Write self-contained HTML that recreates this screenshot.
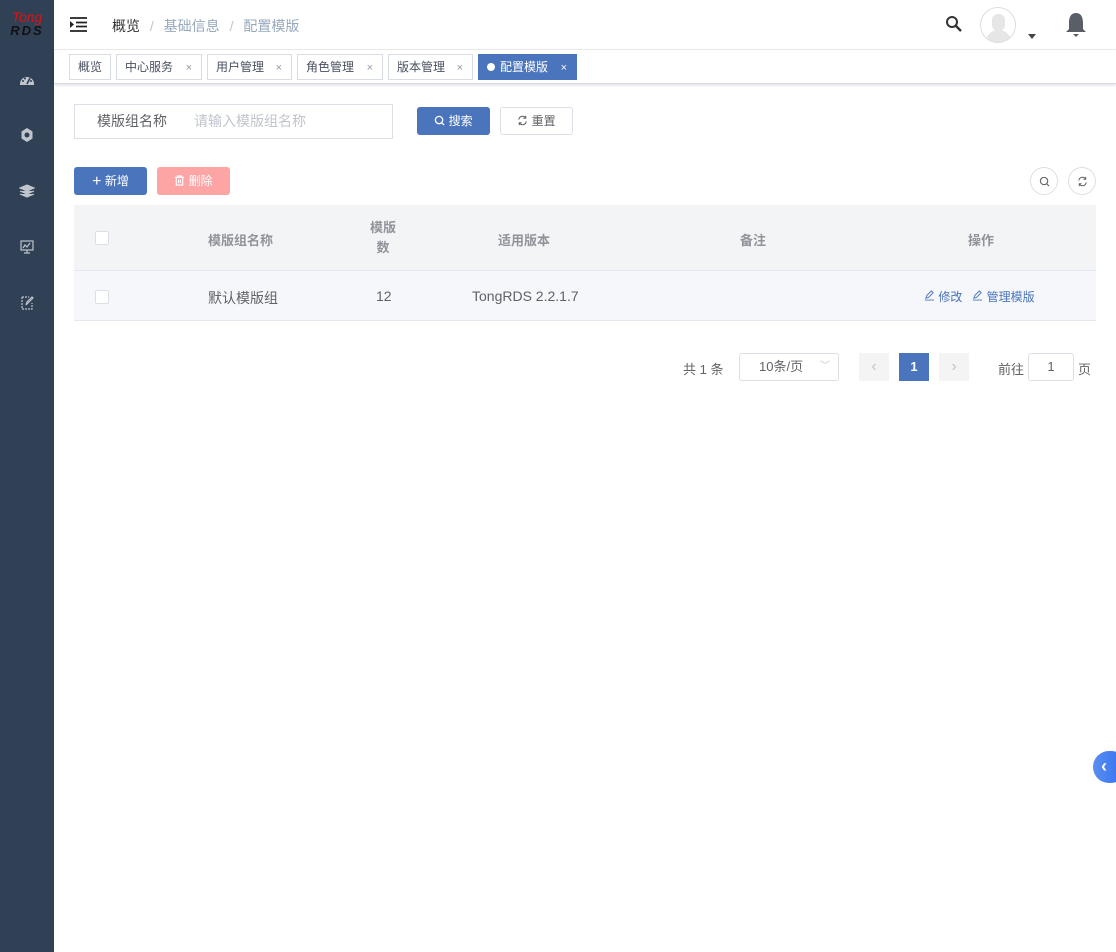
<!DOCTYPE html>
<html><head><meta charset="utf-8"><style>
*{box-sizing:border-box;margin:0;padding:0}
body{width:1116px;height:952px;overflow:hidden;background:#fff;font-family:"Liberation Sans","Noto Sans CJK SC",sans-serif;font-size:13px;color:#606266;position:relative}
.side{position:absolute;left:0;top:0;width:54px;height:952px;background:#304156}
.logo{position:absolute;left:0;top:10px;width:54px;text-align:center;font-style:italic;line-height:14px}
.logo .t{color:#e01010;font-size:14px;font-family:"Liberation Sans",sans-serif}
.logo .r{color:#111;font-size:13px;font-weight:bold;letter-spacing:2px}
.ic{position:absolute;left:19px;width:16px;height:16px}
.hdr{position:absolute;left:54px;top:0;right:0;height:50px;border-bottom:1px solid #eee}
.tabs{position:absolute;left:54px;top:50px;right:0;height:34px;box-shadow:0 1px 3px rgba(0,0,0,.15);border-bottom:1px solid #d8dce5}
.tab{position:absolute;top:4px;height:26px;border:1px solid #d8dce5;font-size:12px;color:#495060;line-height:24px;padding-left:8px}
.tab i{font-style:normal;font-size:11px;color:#999;position:absolute;right:9px;top:1px;line-height:24px}
.tab.act{background:#4a74bb;border-color:#4a74bb;color:#fff}
.tab.act i{color:#fff}
.abs{position:absolute}
.btn{position:absolute;border-radius:3px;font-size:12px;text-align:center;line-height:28px;height:28px}
</style></head><body>
<div class="side">
<div class="logo"><div class="t">Tong</div><div class="r">RDS</div></div>
<svg class="ic" style="top:72px" viewBox="0 0 16 16"><path d="M1 12 A7 7 0 0 1 15 12 L15 13 L1 13Z" fill="#c0c4cc"/><path d="M8 12 L11 6" stroke="#304156" stroke-width="1.6"/><circle cx="4" cy="9" r="1" fill="#304156"/><circle cx="6" cy="6.5" r="1" fill="#304156"/><circle cx="12" cy="9" r="1" fill="#304156"/></svg>
<svg class="ic" style="top:127px" viewBox="0 0 16 16"><path d="M8 1 L13.5 4.5 L13.5 11.5 L8 15 L2.5 11.5 L2.5 4.5Z" fill="#c0c4cc"/><circle cx="8" cy="8" r="2.5" fill="#304156"/></svg>
<svg class="ic" style="top:183px" viewBox="0 0 16 16"><path d="M8 2 L15 5 L8 8 L1 5Z M1 8 L8 11 L15 8 M1 11 L8 14 L15 11" fill="#c0c4cc" stroke="#c0c4cc" stroke-width="1.2"/></svg>
<svg class="ic" style="top:239px" viewBox="0 0 16 16" fill="none" stroke="#c0c4cc" stroke-width="1.2"><rect x="2" y="2" width="12" height="9"/><path d="M4 9 L6 6 L8 8 L11 4 M8 11 L8 14 M5 14 L11 14"/></svg>
<svg class="ic" style="top:295px" viewBox="0 0 16 16" fill="none" stroke="#c0c4cc" stroke-width="1.2"><path d="M3 2 L10 2 M3 2 L3 14 L13 14 L13 8" stroke-dasharray="2 1"/><path d="M7 10 L8 7 L13 2 L14 3 L9 8Z"/></svg>
</div>
<div class="hdr">
<svg class="abs" style="left:16px;top:17px" width="17" height="15" viewBox="0 0 17 15"><path d="M0 1H17M6 5.5H17M6 9.5H17M0 14H17" stroke="#222" stroke-width="1.8"/><path d="M0 4L4 7.5L0 11Z" fill="#222"/></svg>
<div class="abs" style="left:58px;top:16px;font-size:14px;color:#303133">概览 <span style="color:#c0c4cc;margin:0 6px">/</span> <span style="color:#97a8be">基础信息</span> <span style="color:#c0c4cc;margin:0 6px">/</span> <span style="color:#97a8be">配置模版</span></div>
<svg class="abs" style="left:891px;top:15px" width="18" height="18" viewBox="0 0 18 18"><circle cx="7" cy="7" r="5" fill="none" stroke="#333" stroke-width="2"/><path d="M11 11L16 16" stroke="#333" stroke-width="2.4"/></svg>
<div class="abs" style="left:926px;top:7px;width:36px;height:36px;border-radius:50%;border:1px solid #ddd;background:#fff;overflow:hidden"><div class="abs" style="left:11px;top:6px;width:13px;height:17px;border-radius:6px;background:#e6e6e6"></div><div class="abs" style="left:5px;top:22px;width:25px;height:18px;border-radius:12px 12px 0 0;background:#e6e6e6"></div></div>
<div class="abs" style="left:974px;top:34px;border:4px solid transparent;border-top:5px solid #444;border-bottom:0"></div>
<svg class="abs" style="left:1010px;top:12px" width="24" height="26" viewBox="0 0 24 26"><path d="M12 1 C6 1 5 7 5 11 L5 17 L2 20 L22 20 L19 17 L19 11 C19 7 18 1 12 1Z" fill="#5a5e66"/><path d="M9 22 L15 22 L12 25Z" fill="#5a5e66"/></svg>
</div>
<div class="tabs">
<div class="tab" style="left:15px;width:42px">概览</div>
<div class="tab" style="left:62px;width:86px">中心服务<i>×</i></div>
<div class="tab" style="left:153px;width:85px">用户管理<i>×</i></div>
<div class="tab" style="left:243px;width:86px">角色管理<i>×</i></div>
<div class="tab" style="left:334px;width:85px">版本管理<i>×</i></div>
<div class="tab act" style="left:424px;width:99px"><span style="display:inline-block;width:8px;height:8px;border-radius:50%;background:#fff;margin-right:5px;vertical-align:0"></span>配置模版<i>×</i></div>
</div>
<div class="abs" style="left:74px;top:104px;width:319px;height:35px;border:1px solid #dcdfe6;line-height:33px;font-size:14px"><span style="position:absolute;left:22px;color:#606266">模版组名称</span><span style="position:absolute;left:119px;color:#c0c4cc">请输入模版组名称</span></div>
<div class="btn" style="left:417px;top:107px;width:73px;background:#4a74bb;color:#fff">
<svg width="11" height="11" viewBox="0 0 12 12" style="vertical-align:-1px"><circle cx="5.5" cy="5.5" r="4" fill="none" stroke="#fff" stroke-width="1.4"/><path d="M8.5 8.5L11 11" stroke="#fff" stroke-width="1.4"/></svg> 搜索</div>
<div class="btn" style="left:500px;top:107px;width:73px;border:1px solid #dcdfe6;color:#606266;line-height:26px">
<svg width="11" height="11" viewBox="0 0 12 12" style="vertical-align:-1px" fill="none" stroke="#606266" stroke-width="1.2"><path d="M2 5A4 4 0 0 1 9.5 3.5M10 7A4 4 0 0 1 2.5 8.5"/><path d="M9.5 1V3.5H7M2.5 11V8.5H5"/></svg> 重置</div>
<div class="btn" style="left:74px;top:167px;width:73px;background:#4a74bb;color:#fff"><span style="font-size:16px;vertical-align:-1px">+</span> 新增</div>
<div class="btn" style="left:157px;top:167px;width:73px;background:#fda4a4;color:#fff">
<svg width="11" height="11" viewBox="0 0 12 12" style="vertical-align:-1px" fill="none" stroke="#fff" stroke-width="1.2"><path d="M1 2.5H11M4 2.5V1H8V2.5M2.5 2.5V11H9.5V2.5M5 5V9M7 5V9"/></svg> 删除</div>
<div class="abs" style="left:1030px;top:167px;width:28px;height:28px;border-radius:50%;border:1px solid #dcdfe6"><svg class="abs" style="left:8px;top:8px" width="11" height="11" viewBox="0 0 12 12"><circle cx="5.5" cy="5.5" r="4" fill="none" stroke="#606266" stroke-width="1.2"/><path d="M8.5 8.5L11 11" stroke="#606266" stroke-width="1.2"/></svg></div>
<div class="abs" style="left:1068px;top:167px;width:28px;height:28px;border-radius:50%;border:1px solid #dcdfe6"><svg class="abs" style="left:8px;top:8px" width="11" height="11" viewBox="0 0 12 12" fill="none" stroke="#606266" stroke-width="1.1"><path d="M2 5A4 4 0 0 1 9.5 3.5M10 7A4 4 0 0 1 2.5 8.5"/><path d="M9.5 1V3.5H7M2.5 11V8.5H5"/></svg></div>
<div class="abs" style="left:74px;top:205px;width:1022px;height:66px;background:#f3f4f6;border-bottom:1px solid #e4e7ed;font-weight:bold;color:#909399;font-size:13px">
<div class="abs" style="left:21px;top:26px;width:14px;height:14px;border:1px solid #dcdfe6;background:#fff;border-radius:2px"></div>
<div class="abs" style="left:134px;top:25px">模版组名称</div>
<div class="abs" style="left:296px;top:13px;line-height:20px;text-align:center">模版<br>数</div>
<div class="abs" style="left:424px;top:25px">适用版本</div>
<div class="abs" style="left:666px;top:25px">备注</div>
<div class="abs" style="left:894px;top:25px">操作</div>
</div>
<div class="abs" style="left:74px;top:271px;width:1022px;height:50px;background:#f5f7fa;border-bottom:1px solid #e4e7ed;font-size:14px;color:#606266">
<div class="abs" style="left:21px;top:19px;width:14px;height:14px;border:1px solid #dcdfe6;background:#fff;border-radius:2px"></div>
<div class="abs" style="left:134px;top:17px">默认模版组</div>
<div class="abs" style="left:302px;top:17px">12</div>
<div class="abs" style="left:398px;top:17px">TongRDS 2.2.1.7</div>
<div class="abs" style="left:850px;top:17px;font-size:12px;color:#4a74bb"><svg width="11" height="11" viewBox="0 0 12 12" fill="none" stroke="#4a74bb" stroke-width="1"><path d="M2 9L3 6L8 1L10 3L5 8Z M1 11H11"/></svg> 修改 &nbsp;&nbsp;<svg width="11" height="11" viewBox="0 0 12 12" fill="none" stroke="#4a74bb" stroke-width="1"><path d="M2 9L3 6L8 1L10 3L5 8Z M1 11H11"/></svg> 管理模版</div>
</div>
<div class="abs" style="left:683px;top:359px;font-size:13px">共 1 条</div>
<div class="abs" style="left:739px;top:353px;width:100px;height:28px;border:1px solid #dcdfe6;border-radius:3px;line-height:26px;padding-left:19px">10条/页<span style="position:absolute;right:8px;color:#c0c4cc;font-size:10px">﹀</span></div>
<div class="abs" style="left:859px;top:353px;width:30px;height:28px;background:#f4f4f5;color:#c0c4cc;text-align:center;line-height:28px;font-size:16px">‹</div>
<div class="abs" style="left:899px;top:353px;width:30px;height:28px;background:#4a74bb;color:#fff;text-align:center;line-height:28px;font-weight:bold">1</div>
<div class="abs" style="left:939px;top:353px;width:30px;height:28px;background:#f4f4f5;color:#c0c4cc;text-align:center;line-height:28px;font-size:16px">›</div>
<div class="abs" style="left:998px;top:359px">前往</div>
<div class="abs" style="left:1028px;top:353px;width:46px;height:28px;border:1px solid #dcdfe6;border-radius:3px;text-align:center;line-height:26px">1</div>
<div class="abs" style="left:1078px;top:359px">页</div>
<div class="abs" style="left:1093px;top:751px;width:34px;height:32px;border-radius:16px;background:linear-gradient(90deg,#5a8ef0,#2f6ff0);color:#fff;font-size:18px;line-height:30px;padding-left:8px;font-weight:bold">‹</div>
</body></html>
